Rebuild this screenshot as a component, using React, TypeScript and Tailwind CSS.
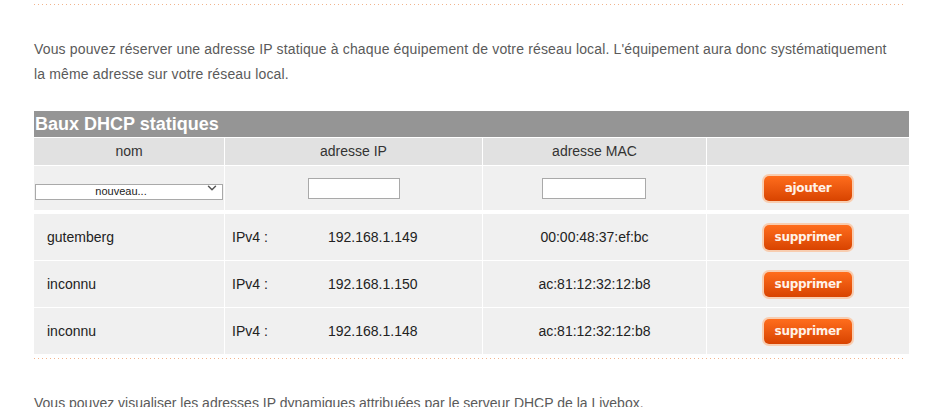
import { ChevronDown } from "lucide-react";

const baux = [
  { nom: "gutemberg", ip: "192.168.1.149", mac: "00:00:48:37:ef:bc" },
  { nom: "inconnu", ip: "192.168.1.150", mac: "ac:81:12:32:12:b8" },
  { nom: "inconnu", ip: "192.168.1.148", mac: "ac:81:12:32:12:b8" },
];

const OrangeButton = ({ label }: { label: string }) => (
  <button className="w-[88px] h-[25px] rounded-[5px] ring-2 ring-[#f8cdb0] bg-gradient-to-b from-[#ff6d1c] to-[#d84300] text-[#fff2e8] text-[12px] font-bold font-['DejaVu_Sans',sans-serif] tracking-[-0.3px] leading-none">
    {label}
  </button>
);

const DottedLine = () => (
  <div className="h-px w-[871px] bg-[linear-gradient(to_right,#f2b48c_1px,transparent_1px)] bg-[length:4px_1px]" />
);

export default function App() {
  return (
    <div className="min-h-screen bg-white pl-[34px] pt-1 font-['Liberation_Sans',Arial,sans-serif] overflow-hidden">
      <DottedLine />

      {/* Intro */}
      <p className="mt-8 w-[875px] text-[14px] leading-[25px] text-[#5a5a5a] tracking-[0.15px]">
        Vous pouvez réserver une adresse IP statique à chaque équipement de votre réseau local. L'équipement aura donc systématiquement
        <br />
        la même adresse sur votre réseau local.
      </p>

      {/* Table */}
      <div className="mt-6 w-[875px]">
        <div className="h-[26px] bg-[#959595] px-px text-[18px] font-bold leading-[26px] text-white">
          Baux DHCP statiques
        </div>

        <div className="mt-px grid grid-cols-[190px_257px_223px_202px] gap-px bg-white text-[14px] text-[#333]">
          <div className="h-[27px] bg-[#e1e1e1] flex items-center justify-center">nom</div>
          <div className="h-[27px] bg-[#e1e1e1] flex items-center justify-center">adresse IP</div>
          <div className="h-[27px] bg-[#e1e1e1] flex items-center justify-center">adresse MAC</div>
          <div className="h-[27px] bg-[#e1e1e1]" />

          <div className="h-[44px] bg-[#f0f0f0] flex items-center pl-px">
            <div className="relative w-[188px] h-[16px]">
              <select className="appearance-none w-full h-full border border-[#a9a9a9] bg-white text-[11px] leading-none text-[#222] [text-align-last:center] pr-4 outline-none">
                <option>nouveau...</option>
              </select>
              <ChevronDown className="absolute right-[4px] top-[1px] w-[14px] h-[14px] text-[#555] pointer-events-none" strokeWidth={2.5} />
            </div>
          </div>
          <div className="h-[44px] bg-[#f0f0f0] flex items-center pl-[83px]">
            <input className="w-[92px] h-[21px] border border-[#a9a9a9] bg-white outline-none" />
          </div>
          <div className="h-[44px] bg-[#f0f0f0] flex items-center pl-[59px]">
            <input className="w-[104px] h-[21px] border border-[#a9a9a9] bg-white outline-none" />
          </div>
          <div className="h-[44px] bg-[#f0f0f0] flex items-center pl-[57px]">
            <OrangeButton label="ajouter" />
          </div>
        </div>

        <div className="mt-1 grid grid-cols-[190px_257px_223px_202px] gap-px bg-white text-[14px] text-[#222]">
          {baux.map((b, i) => (
            <div key={i} className="contents">
              <div className="h-[46px] bg-[#f0f0f0] flex items-center pl-[13px]">{b.nom}</div>
              <div className="h-[46px] bg-[#f0f0f0] flex items-center pl-[7px]">
                <span className="w-[96px]">IPv4 :</span>
                <span>{b.ip}</span>
              </div>
              <div className="h-[46px] bg-[#f0f0f0] flex items-center justify-center">{b.mac}</div>
              <div className="h-[46px] bg-[#f0f0f0] flex items-center pl-[57px]">
                <OrangeButton label="supprimer" />
              </div>
            </div>
          ))}
        </div>
      </div>

      <div className="mt-1">
        <DottedLine />
      </div>

      <p className="mt-8 w-[875px] text-[14px] leading-[25px] text-[#5a5a5a]">
        Vous pouvez visualiser les adresses IP dynamiques attribuées par le serveur DHCP de la Livebox.
      </p>
    </div>
  );
}
